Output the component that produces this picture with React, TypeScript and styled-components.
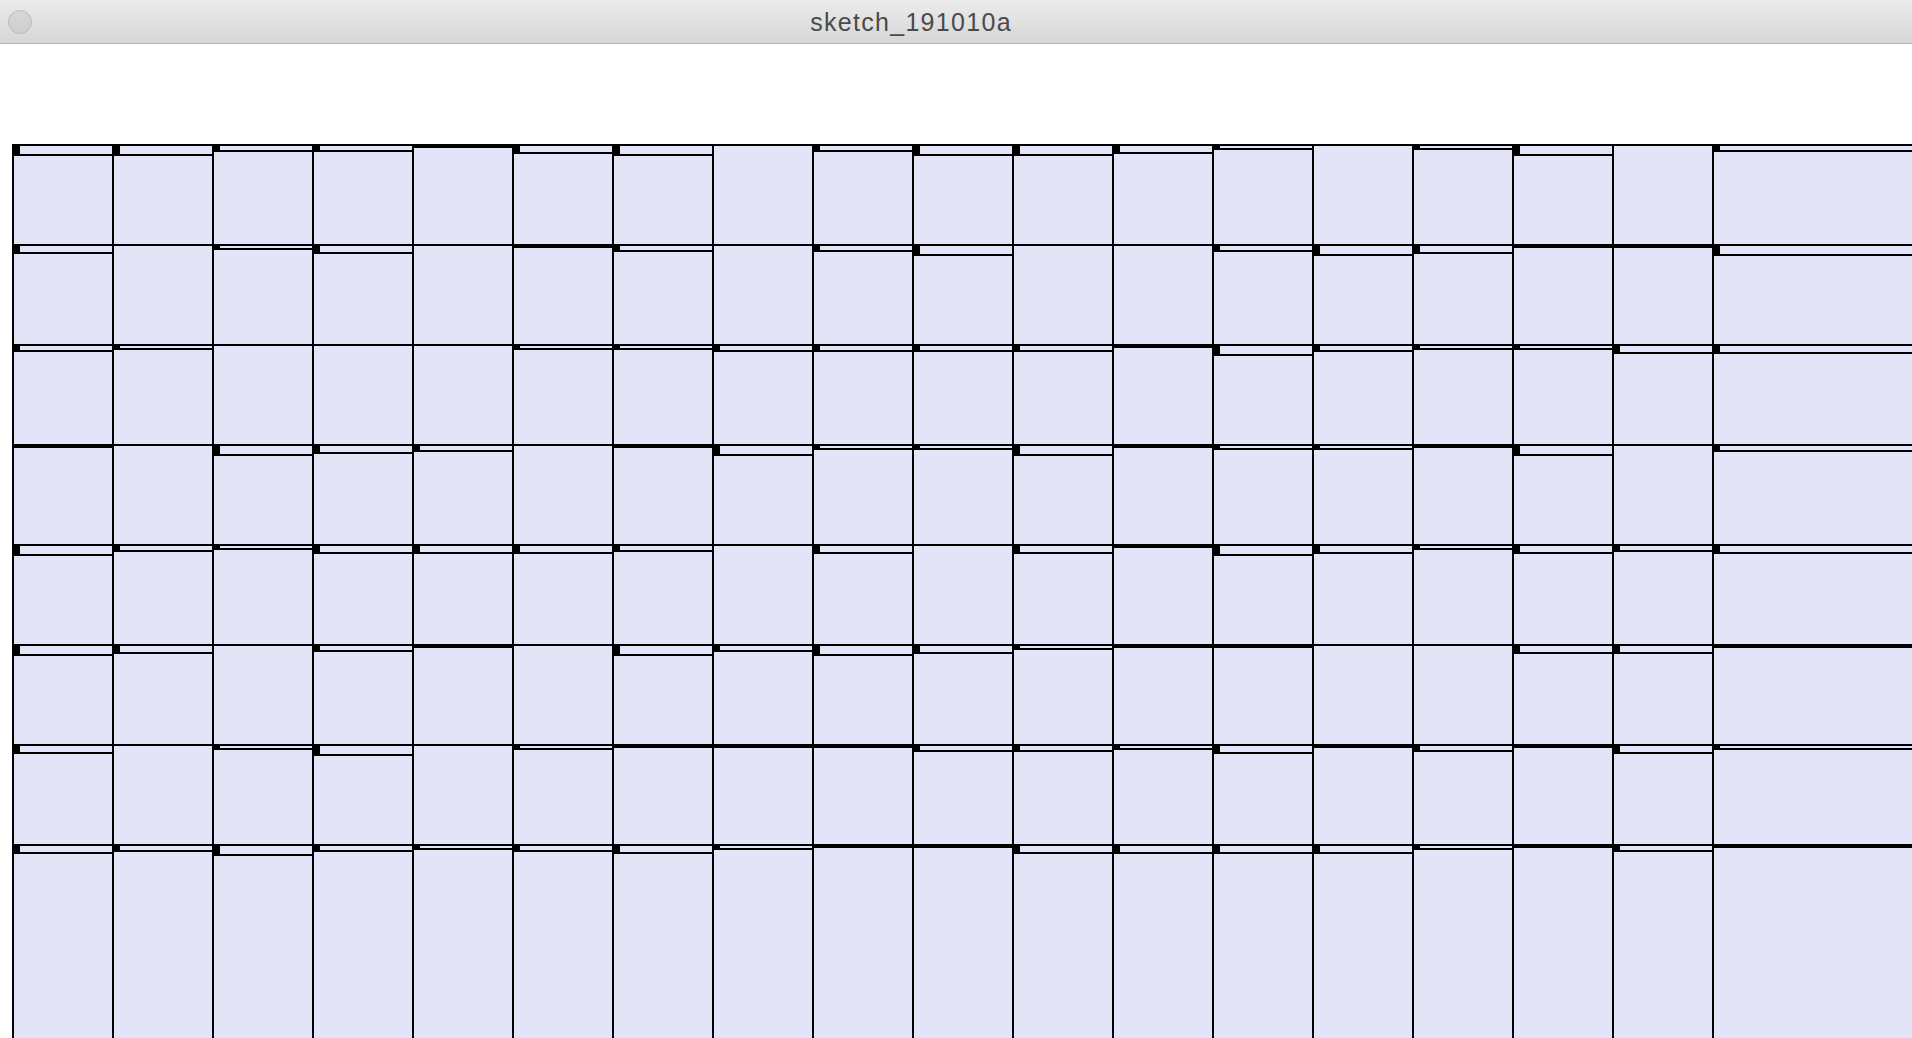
import React from "react";
import styled, { createGlobalStyle } from "styled-components";

const GlobalStyle = createGlobalStyle`
  html, body {
    margin: 0;
    padding: 0;
    background: #ffffff;
    overflow: hidden;
  }
  #root {
    height: 100vh;
  }
`;

const OFFSETS: number[][] = [
  [10, 10, 6, 6, 2, 8, 10, 0, 6, 10, 10, 8, 4, 0, 4, 10, 0, 6],
  [8, 0, 4, 8, 0, 2, 6, 0, 6, 10, 0, 0, 6, 10, 8, 2, 2, 10],
  [6, 4, 0, 0, 0, 4, 4, 6, 6, 6, 6, 2, 10, 6, 4, 4, 8, 8],
  [2, 0, 10, 8, 6, 0, 2, 10, 4, 4, 10, 2, 4, 4, 2, 10, 0, 6],
  [10, 6, 4, 8, 8, 8, 6, 0, 8, 0, 8, 2, 10, 8, 4, 8, 6, 8],
  [10, 8, 0, 6, 2, 0, 10, 6, 10, 8, 4, 2, 2, 0, 0, 8, 8, 2],
  [8, 0, 4, 10, 0, 4, 2, 2, 2, 6, 6, 4, 8, 2, 6, 2, 8, 4],
  [8, 6, 10, 6, 4, 6, 8, 4, 2, 2, 8, 8, 8, 8, 4, 2, 6, 2],
];

const Window = styled.div`
  display: flex;
  flex-direction: column;
  height: 100vh;
  width: 1912px;
  overflow: hidden;
  background: #ffffff;
`;

const TitleBar = styled.div`
  position: relative;
  flex: 0 0 43px;
  display: flex;
  align-items: center;
  justify-content: center;
  padding-right: 90px;
  background: linear-gradient(#ececec, #d6d6d6);
  border-bottom: 1px solid #b3b3b3;
  box-sizing: content-box;
`;

const CloseButton = styled.div`
  position: absolute;
  left: 8px;
  top: 10px;
  width: 22px;
  height: 22px;
  border-radius: 50%;
  background: linear-gradient(#d8d8d8, #cdcdcd);
  border: 1px solid #bababa;
`;

const Title = styled.span`
  font-family: "Liberation Sans", Arial, sans-serif;
  font-size: 25px;
  letter-spacing: 1.3px;
  color: #4a4a4a;
  line-height: 1;
  margin-top: 1px;
`;

const Canvas = styled.div`
  flex: 1;
  min-height: 0;
  display: grid;
  grid-template-columns: repeat(17, 100px) 200px;
  grid-template-rows: repeat(7, 100px) 1fr;
  padding: 100px 0 0 12px;
`;

const Cell = styled.div`
  display: flex;
  flex-direction: column;
  background: #e4e4f8;
  border-top: 2px solid #000;
  border-left: 2px solid #000;
  min-width: 0;
  min-height: 0;
  overflow: hidden;
`;

const CellHead = styled.div<{ $gap: number }>`
  display: flex;
  height: ${(p) => p.$gap}px;
  flex: 0 0 auto;
`;

const Block = styled.div`
  width: 6px;
  background: #000;
`;

const InnerLine = styled.div`
  flex: 0 0 2px;
  background: #000;
`;

const CellView: React.FC<{ d: number }> = ({ d }) => (
  <Cell>
    {d >= 2 && (
      <>
        <CellHead $gap={d - 2}>
          <Block />
        </CellHead>
        <InnerLine />
      </>
    )}
  </Cell>
);

export default function App() {
  return (
    <>
      <GlobalStyle />
      <Window>
        <TitleBar>
          <CloseButton />
          <Title>sketch_191010a</Title>
        </TitleBar>
        <Canvas>
          {OFFSETS.map((row, r) =>
            row.map((d, c) => <CellView key={`${r}-${c}`} d={d} />)
          )}
        </Canvas>
      </Window>
    </>
  );
}
